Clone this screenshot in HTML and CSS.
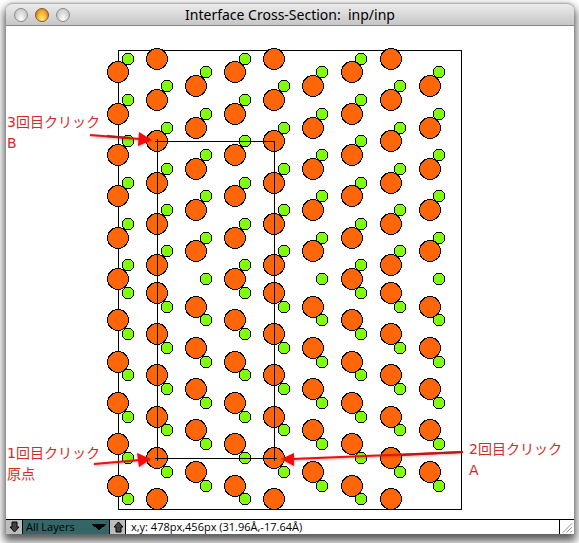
FILE: index.html
```html
<!DOCTYPE html>
<html lang="ja">
<head>
<meta charset="utf-8">
<title>Interface Cross-Section: inp/inp</title>
<link rel="stylesheet" href="styles.css">
</head>
<body>
<main class="window">
  <header class="titlebar">
    <div class="lights">
      <button class="light" aria-label="Close"></button>
      <button class="light light-amber" aria-label="Minimize"></button>
      <button class="light" aria-label="Zoom"></button>
    </div>
    <h1 class="title">Interface Cross-Section:&nbsp; inp/inp</h1>
  </header>

  <!-- Drawing units are window coordinates -->
  <svg class="canvas" viewBox="6 26 568 493">
    <defs>
      <g id="big-a"><circle cy="72" r="10.5"/><circle cy="114" r="10.5"/><circle cy="155" r="10.5"/><circle cy="196" r="10.5"/><circle cy="238" r="10.5"/><circle cy="279" r="10.5"/><circle cy="320" r="10.5"/><circle cy="362" r="10.5"/><circle cy="403" r="10.5"/><circle cy="444" r="10.5"/><circle cy="486" r="10.5"/></g>
      <g id="small-a"><circle cy="59" r="5.8"/><circle cy="100" r="5.8"/><circle cy="141" r="5.8"/><circle cy="183" r="5.8"/><circle cy="224" r="5.8"/><circle cy="265" r="5.8"/><circle cy="293" r="5.8"/><circle cy="334" r="5.8"/><circle cy="375" r="5.8"/><circle cy="417" r="5.8"/><circle cy="458" r="5.8"/><circle cy="499" r="5.8"/></g>
      <g id="big-b"><circle cy="59" r="10.5"/><circle cy="100" r="10.5"/><circle cy="141" r="10.5"/><circle cy="183" r="10.5"/><circle cy="224" r="10.5"/><circle cy="265" r="10.5"/><circle cy="293" r="10.5"/><circle cy="334" r="10.5"/><circle cy="375" r="10.5"/><circle cy="417" r="10.5"/><circle cy="458" r="10.5"/><circle cy="499" r="10.5"/></g>
      <g id="small-b"><circle cy="86" r="5.8"/><circle cy="128" r="5.8"/><circle cy="169" r="5.8"/><circle cy="210" r="5.8"/><circle cy="251" r="5.8"/><circle cy="307" r="5.8"/><circle cy="348" r="5.8"/><circle cy="389" r="5.8"/><circle cy="430" r="5.8"/><circle cy="472" r="5.8"/></g>
      <g id="big-c"><circle cy="86" r="10.5"/><circle cy="128" r="10.5"/><circle cy="169" r="10.5"/><circle cy="210" r="10.5"/><circle cy="251" r="10.5"/><circle cy="307" r="10.5"/><circle cy="348" r="10.5"/><circle cy="389" r="10.5"/><circle cy="430" r="10.5"/><circle cy="472" r="10.5"/></g>
      <g id="small-c"><circle cy="72" r="5.8"/><circle cy="114" r="5.8"/><circle cy="155" r="5.8"/><circle cy="196" r="5.8"/><circle cy="238" r="5.8"/><circle cy="279" r="5.8"/><circle cy="320" r="5.8"/><circle cy="362" r="5.8"/><circle cy="403" r="5.8"/><circle cy="444" r="5.8"/><circle cy="486" r="5.8"/></g>
    </defs>
    <rect class="outline" x="118.5" y="50.5" width="343" height="459"/>
    <g class="atoms small">
      <use href="#small-a" x="128"/><use href="#small-b" x="167"/><use href="#small-c" x="206"/>
      <use href="#small-a" x="245"/><use href="#small-b" x="284"/><use href="#small-c" x="322"/>
      <use href="#small-a" x="361"/><use href="#small-b" x="400"/><use href="#small-c" x="439"/>
    </g>
    <g class="atoms big">
      <use href="#big-a" x="118"/><use href="#big-b" x="157"/><use href="#big-c" x="196"/>
      <use href="#big-a" x="235"/><use href="#big-b" x="274"/><use href="#big-c" x="313"/>
      <use href="#big-a" x="352"/><use href="#big-b" x="391"/><use href="#big-c" x="430"/>
    </g>
    <path class="outline" d="M155 141.5H275M157.5 139V461M155 458.5H277M274.5 141V461"/>
    <g class="arrows">
      <path class="shaft" d="M90 135L140 139M94 464L140 460M292 459L463 452"/>
      <path class="shaft-dark" d="M107 136L130 138M402 455L463 452"/>
      <path class="head" d="M152 140L139 132L138 146ZM151 459L137 453L139 467ZM281 459L294 453L294 466Z"/>
    </g>
    <g class="notes">
      <text x="7" y="127">3回目クリック</text>
      <text x="7" y="148">B</text>
      <text x="7" y="458">1回目クリック</text>
      <text x="7" y="479">原点</text>
      <text x="469" y="454">2回目クリック</text>
      <text x="469" y="475">A</text>
    </g>
  </svg>

  <footer class="status">
    <button class="step" aria-label="Layer down">
      <svg width="12" height="12" viewBox="0 0 12 12"><path d="M4 1H9V6H11L6.500 11L2 6H4Z"/></svg>
    </button>
    <select class="layers" aria-label="Layer">
      <option>All Layers</option>
    </select>
    <button class="step step-up" aria-label="Layer up">
      <svg width="12" height="12" viewBox="0 0 12 12"><path d="M4 11H9V6H11L6.500 1L2 6H4Z"/></svg>
    </button>
    <output class="readout">x,y: 478px,456px (31.96Å,-17.64Å)</output>
    <svg class="grip" width="15" height="14" viewBox="0 0 15 14"><path d="M3 13L13 3M7 13L13 7M11 13L13 11"/></svg>
  </footer>
</main>
</body>
</html>
```
FILE: styles.css
```css
* { box-sizing: border-box; }

body {
  margin: 0;
  padding: 3px 5px 9px 6px;
  min-height: 100vh;
  overflow: hidden;
  background: #fff;
  font-family: "Open Sans", "Noto Sans CJK JP", sans-serif;
}

.window {
  background: #fff;
  border-radius: 7px 7px 0 0;
  box-shadow: 0 0 1px #777, 0 5px 9px 2px rgba(0, 0, 0, 0.65);
}

.titlebar {
  display: grid;
  grid-template-columns: 1fr auto 1fr;
  align-items: center;
  height: 23px;
  padding: 0 8px;
  border-top: 1px solid #b4b4b4;
  border-bottom: 1px solid #858585;
  border-radius: 7px 7px 0 0;
  background: linear-gradient(#ececec, #c6c6c6);
}

.lights { display: flex; gap: 7px; }

.light {
  width: 14px;
  height: 14px;
  padding: 0;
  border: 1px solid #8a8a8a;
  border-radius: 50%;
  background: radial-gradient(ellipse at 50% 85%, #fff, #dadada 50%, #b8b8b8);
}

.light-amber {
  border-color: #8a5526;
  background: radial-gradient(ellipse at 50% 90%, #fff67a, #f7b43a 50%, #b85d10);
}

.title {
  margin: 0;
  font-family: "Noto Sans", sans-serif;
  font-size: 14px;
  line-height: 20px;
  font-weight: 400;
  color: #000;
}

.canvas { display: block; width: 100%; }

.outline { fill: none; stroke: #000; shape-rendering: crispEdges; }
.atoms { stroke: #000; shape-rendering: crispEdges; }
.small { fill: #80ff0a; }
.big { fill: #ff660a; }

.arrows { filter: drop-shadow(0 1px 1px rgba(120, 0, 0, 0.35)); }
.shaft { stroke: #ea1010; stroke-width: 2; }
.shaft-dark { stroke: #b51a1a; stroke-width: 2; }
.head { fill: #f80808; }

.notes {
  fill: #d42a2a;
  font-family: "DejaVu Sans", "Noto Sans CJK JP", sans-serif;
  font-size: 14px;
}

.status {
  display: flex;
  height: 15px;
  border-top: 1px solid #000;
  font-size: 11px;
  line-height: 14px;
}

.step {
  display: flex;
  justify-content: center;
  align-items: center;
  width: 17px;
  padding: 0;
  border: 0;
  border-right: 1px solid #000;
  background: #bdbdbd;
}

.step path { fill: #444; stroke: #000; }
.step-up { border-left: 1px solid #000; }

.layers {
  width: 86px;
  padding: 0 20px 0 3px;
  border: 0;
  border-radius: 0;
  appearance: none;
  background: linear-gradient(to bottom left, #000 50%, transparent 51%) right 10px center / 8px 6px no-repeat,
    linear-gradient(to bottom right, #000 50%, transparent 51%) right 2px center / 8px 6px no-repeat,
    #336666;
  color: #000;
  font: inherit;
}

.readout { flex: 1; padding: 0 5px; color: #000; white-space: nowrap; }

.grip { border-left: 1px solid #000; fill: none; stroke: #888; }
```
